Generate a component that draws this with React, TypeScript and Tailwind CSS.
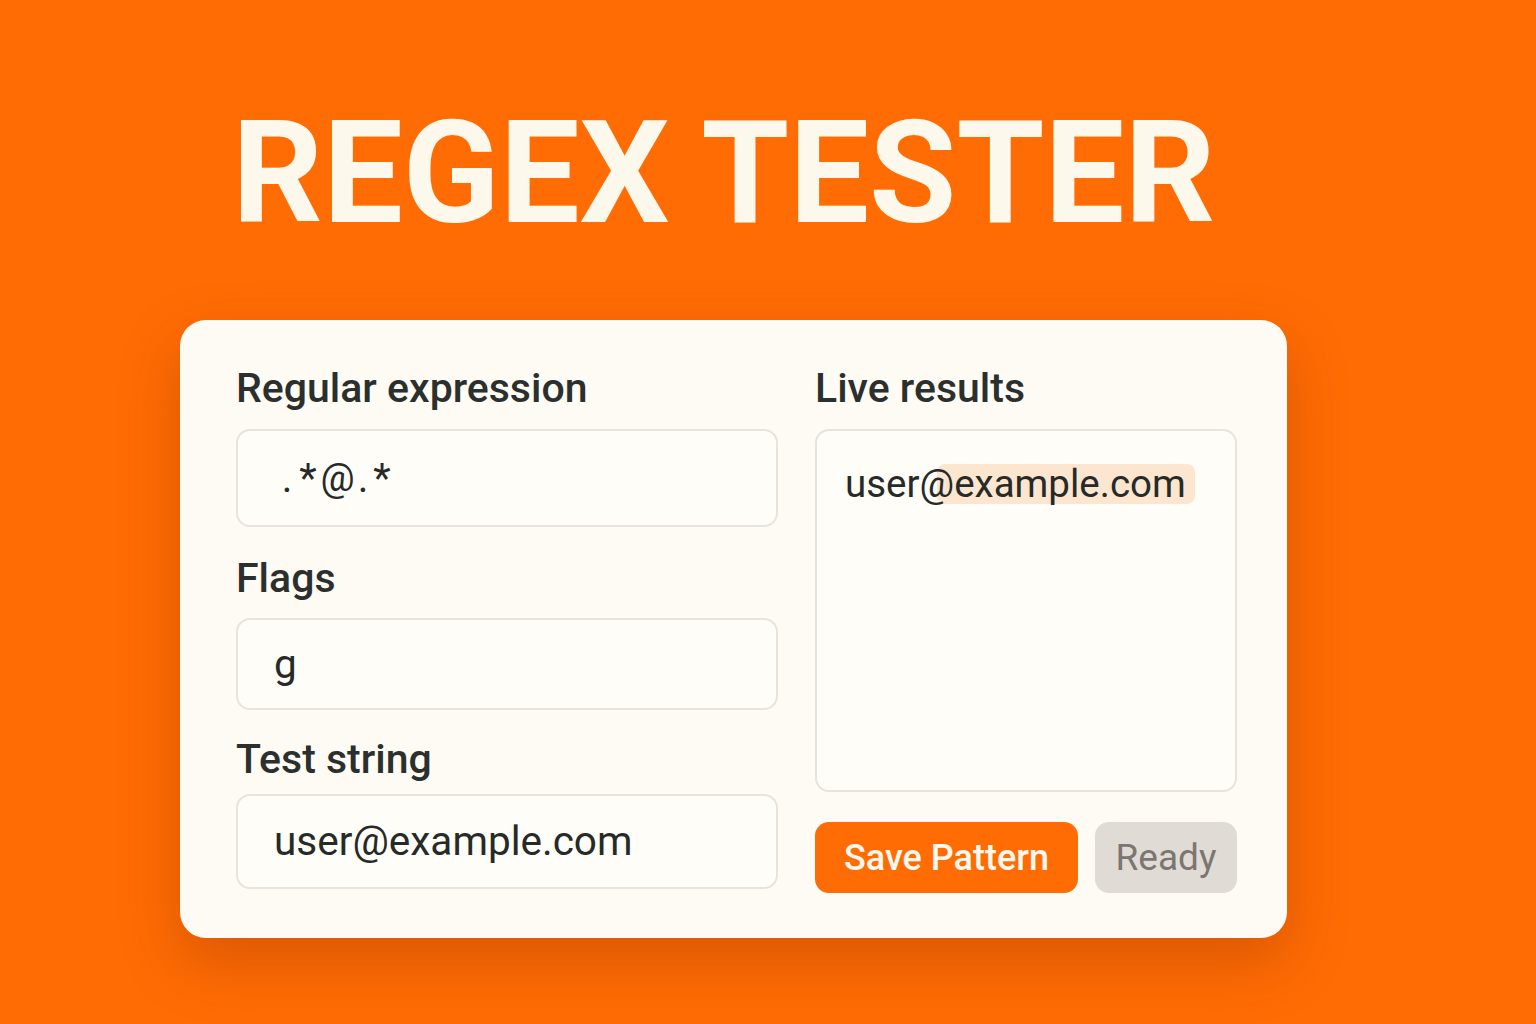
import React from "react";

const font = { fontFamily: "Roboto, 'Liberation Sans', sans-serif" };

function Label({ children, className = "" }: { children: React.ReactNode; className?: string }) {
  return (
    <div className={`text-[41px] leading-[48px] font-medium text-[#2b2f2d] ${className}`}>{children}</div>
  );
}

function Field({ children, h, className = "" }: { children: React.ReactNode; h: string; className?: string }) {
  return (
    <div
      className={`${h} ${className} flex items-center rounded-[14px] border-2 border-[#e7e4de] bg-[#fffdf8] pl-[36px] text-[40.5px] leading-[47px] text-[#262a28]`}
    >
      {children}
    </div>
  );
}

export default function App() {
  return (
    <div className="min-h-[1024px] w-full bg-[#ff6c04] pt-[103px]" style={font}>
      <h1 className="ml-[232px] text-[142px] leading-[142px] font-bold text-[#fdf8ec]">REGEX TESTER</h1>
      <div className="ml-[180px] mt-[75px] w-[1107px] rounded-[26px] bg-[#fdfbf4] pl-[56px] pr-[50px] pt-[44px] pb-[45px] shadow-[0_24px_60px_rgba(140,45,0,0.32)]">
        <div className="flex gap-[37px]">
          <div className="flex w-[542px] flex-col">
            <Label>Regular expression</Label>
            <Field h="h-[98px]" className="mt-[17px]">
              <span className="ml-[3px] flex">
                <span className="flex w-[20px] justify-center">.</span>
                <span className="flex w-[22px] justify-center">*</span>
                <span className="flex w-[37px] justify-center text-[38px]">@</span>
                <span className="flex w-[14px] justify-center">.</span>
                <span className="flex w-[24px] justify-center">*</span>
              </span>
            </Field>
            <Label className="mt-[27px]">Flags</Label>
            <Field h="h-[92px]" className="mt-[16px]">g</Field>
            <Label className="mt-[25px]">Test string</Label>
            <Field h="h-[95px]" className="mt-[11px]">user@example.com</Field>
          </div>
          <div className="flex w-[422px] flex-col">
            <Label>Live results</Label>
            <div className="mt-[17px] h-[363px] rounded-[14px] border-2 border-[#e7e4de] bg-[#fffdf8] pl-[28px] pt-[29px]">
              <p className="text-[38.5px] leading-[47px] text-[#262a28]">
                <span className="relative z-10">user@</span>
                <span className="-ml-[17px] inline-block h-[40px] rounded-[8px] bg-[#fde6cf] pl-[17px] pr-[9px] leading-[40px]">
                  example.com
                </span>
              </p>
            </div>
            <div className="mt-[30px] flex gap-[17px]">
              <button className="h-[71px] w-[263px] rounded-[14px] bg-[#ff6c04] text-[36px] font-medium text-[#fff8ee]">
                Save Pattern
              </button>
              <button className="h-[71px] w-[142px] rounded-[14px] bg-[#e1dbd6] text-[37px] text-[#7b7670]">
                Ready
              </button>
            </div>
          </div>
        </div>
      </div>
    </div>
  );
}
